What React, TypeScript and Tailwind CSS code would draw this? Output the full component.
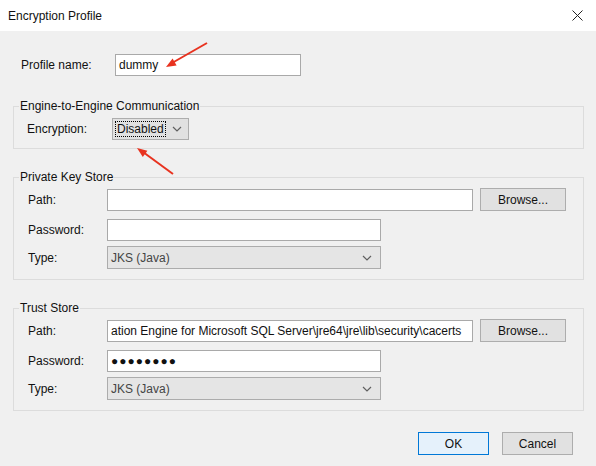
import React from "react";

const Chevron: React.FC<{ className?: string }> = ({ className }) => (
  <svg
    width="10"
    height="6"
    viewBox="0 0 10 6"
    fill="none"
    stroke="#606060"
    strokeWidth="1.2"
    className={className}
  >
    <polyline points="1 1 5 5 9 1" />
  </svg>
);

const TextBox: React.FC<{ className?: string; children?: React.ReactNode }> = ({
  className,
  children,
}) => (
  <div
    className={`h-[22px] bg-white border border-[#a9a9a9] flex items-center pl-[3px] overflow-hidden whitespace-nowrap ${
      className || ""
    }`}
  >
    {children}
  </div>
);

const TypeSelect: React.FC = () => (
  <div className="w-[274px] h-[23px] bg-[#e5e5e5] border border-[#acacac] flex items-center justify-between pl-[3px] pr-[8px] text-[#444]">
    <span>JKS (Java)</span>
    <Chevron />
  </div>
);

const Button: React.FC<{ className?: string; children: React.ReactNode }> = ({
  className,
  children,
}) => (
  <div
    className={`h-[23px] flex items-center justify-center border ${
      className || "bg-[#e1e1e1] border-[#adadad]"
    }`}
  >
    {children}
  </div>
);

const Row: React.FC<{ label: string; className?: string; children: React.ReactNode }> = ({
  label,
  className,
  children,
}) => (
  <div className={`flex items-center pl-[14px] ${className || ""}`}>
    <div className="w-[79px]">{label}</div>
    {children}
  </div>
);

const Group: React.FC<{ title: string; className?: string; children: React.ReactNode }> = ({
  title,
  className,
  children,
}) => (
  <fieldset className={`border border-[#dcdcdc] ${className || ""}`}>
    <legend className="ml-[5px] px-[1px] leading-[14px]">{title}</legend>
    {children}
  </fieldset>
);

const KeyStore: React.FC<{
  title: string;
  path?: string;
  password?: string;
  className?: string;
}> = ({ title, path, password, className }) => (
  <Group title={title} className={`pb-[10px] ${className || ""}`}>
    <Row label="Path:" className="mt-[4px]">
      <TextBox className="w-[366px]">{path}</TextBox>
      <Button className="ml-[7px] w-[86px] bg-[#e1e1e1] border-[#adadad]">Browse...</Button>
    </Row>
    <Row label="Password:" className="mt-[8px]">
      <TextBox className="w-[274px] tracking-[1px]">{password}</TextBox>
    </Row>
    <Row label="Type:" className="mt-[5px]">
      <TypeSelect />
    </Row>
  </Group>
);

export default function App() {
  return (
    <div className="relative w-[596px] h-[466px] overflow-hidden bg-[#f0f0f0] text-[12px] text-[#111] font-['Liberation_Sans',sans-serif]">
      <div className="h-[31px] bg-white flex items-center justify-between pl-[8px] pr-[13px]">
        <span>Encryption Profile</span>
        <svg width="11" height="11" viewBox="0 0 11 11" stroke="#222" strokeWidth="1">
          <line x1="0.5" y1="0.5" x2="10.5" y2="10.5" />
          <line x1="10.5" y1="0.5" x2="0.5" y2="10.5" />
        </svg>
      </div>

      <div className="pl-[13px] pr-[12px] pt-[23px]">
        <div className="flex items-center pl-[8px]">
          <div className="w-[94px]">Profile name:</div>
          <TextBox className="w-[186px] pl-[2px]">dummy</TextBox>
        </div>

        <Group title="Engine-to-Engine Communication" className="mt-[23px] pb-[8px]">
          <div className="flex items-center pl-[13px] mt-[5px]">
            <div className="w-[85px]">Encryption:</div>
            <div className="w-[77px] h-[22px] bg-[#e1e1e1] border border-[#adadad] flex items-center pl-[2px]">
              <div className="h-[16px] w-[51px] border border-dotted border-black flex items-center pl-[1px]">
                Disabled
              </div>
              <Chevron className="ml-[6px]" />
            </div>
          </div>
        </Group>

        <KeyStore title="Private Key Store" className="mt-[21px]" />

        <KeyStore
          title="Trust Store"
          className="mt-[21px]"
          path={"ation Engine for Microsoft SQL Server\\jre64\\jre\\lib\\security\\cacerts"}
          password="●●●●●●●●"
        />

        <div className="flex justify-end gap-[13px] mt-[21px] mr-[11px]">
          <Button className="w-[71px] bg-[#e5f1fb] border-[#0078d7]">OK</Button>
          <Button className="w-[71px] bg-[#e1e1e1] border-[#adadad]">Cancel</Button>
        </div>
      </div>

      <svg className="absolute left-0 top-0 pointer-events-none" width="596" height="466">
        <line x1="207" y1="43" x2="172" y2="63" stroke="#e8321f" strokeWidth="2" />
        <polygon points="166,67 176.6,65.4 172.6,58.4" fill="#e8321f" />
        <line x1="173" y1="174" x2="143" y2="152" stroke="#e8321f" strokeWidth="2" />
        <polygon points="137,148 147.4,150.7 142.8,157.1" fill="#e8321f" />
      </svg>
    </div>
  );
}
